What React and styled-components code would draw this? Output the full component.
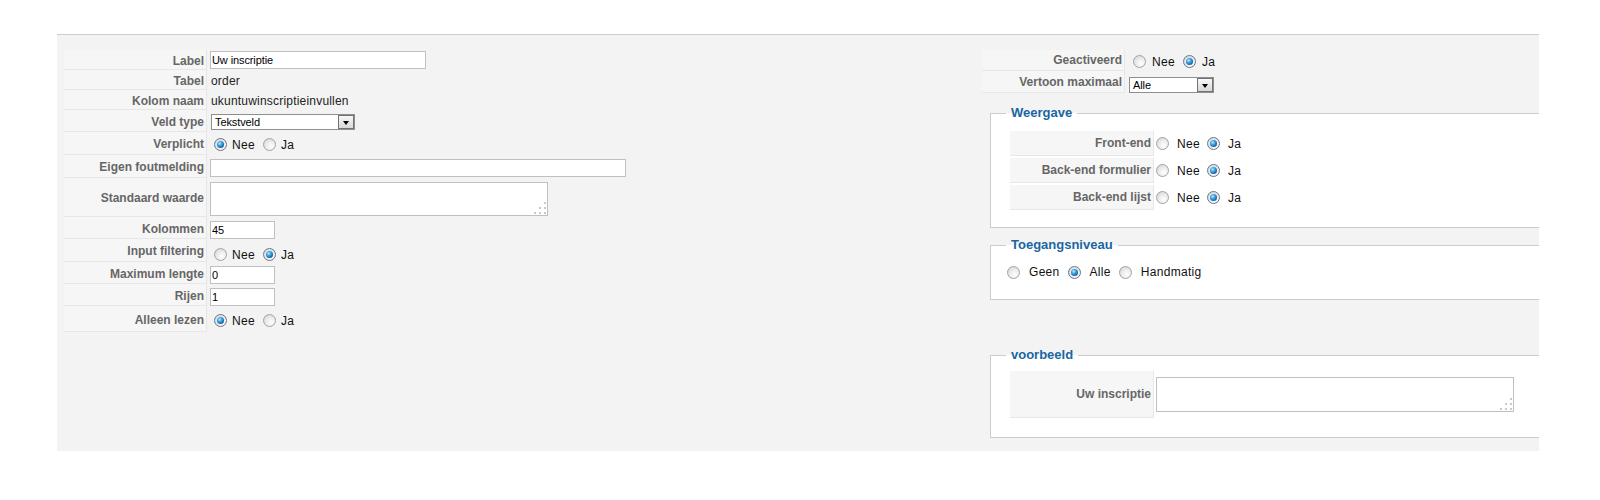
import React from 'react';
import styled, { createGlobalStyle } from 'styled-components';

const Global = createGlobalStyle`
  html, body { margin: 0; padding: 0; background: #ffffff; }
  body { font-family: "Liberation Sans", Arial, sans-serif; }
`;

const Page = styled.div`
  padding: 34px 0 0 57px;
`;

const Panel = styled.div`
  width: 1482px;
  box-sizing: border-box;
  background: #f3f3f3;
  border-top: 1px solid #cccccc;
  padding: 15px 0 13px 7px;
  display: grid;
  grid-template-columns: 918px minmax(0, 1fr);
  align-items: start;
  overflow: hidden;
`;

const Column = styled.div`
  display: flex;
  flex-direction: column;
  min-width: 0;
`;

const Row = styled.div`
  display: flex;
  height: ${(p) => p.$h}px;
`;

const Key = styled.div`
  flex: 0 0 ${(p) => p.$w || 143}px;
  box-sizing: border-box;
  background: #f6f6f6;
  border-bottom: 1px solid #e7e7e7;
  border-right: 1px solid #e7e7e7;
  display: flex;
  align-items: center;
  justify-content: flex-end;
  padding: ${(p) => p.$nudge || 0}px 2px 0 0;
  font: bold 12px/14px "Liberation Sans", Arial, sans-serif;
  color: #666666;
  white-space: nowrap;
`;

const Value = styled.div`
  flex: 1;
  min-width: 0;
  display: flex;
  align-items: ${(p) => (p.$top == null ? 'center' : 'flex-start')};
  padding: ${(p) => p.$top || 0}px 0 0 ${(p) => (p.$pad == null ? 3 : p.$pad)}px;
`;

const PlainText = styled.span`
  font: 12px/14px "Liberation Sans", Arial, sans-serif;
  color: #222222;
  letter-spacing: 0.2px;
  padding: 1px 0 0 1px;
`;

const TextInput = styled.input`
  box-sizing: border-box;
  width: ${(p) => p.$w}px;
  height: 18px;
  margin: 0;
  border: 1px solid #c0c0c0;
  background: #ffffff;
  padding: 0 1px;
  font: 11px "Liberation Sans", Arial, sans-serif;
  letter-spacing: -0.1px;
  color: #000000;
  outline: none;
`;

const AreaBox = styled.div`
  position: relative;
  width: ${(p) => p.$w}px;
  height: ${(p) => p.$h}px;
`;

const Area = styled.textarea`
  box-sizing: border-box;
  display: block;
  width: 100%;
  height: 100%;
  margin: 0;
  border: 1px solid #c0c0c0;
  background: #ffffff;
  resize: none;
  outline: none;
  font: 11px "Liberation Sans", Arial, sans-serif;
`;

const Grip = styled.svg`
  position: absolute;
  right: 2px;
  bottom: 2px;
  pointer-events: none;
`;

const SelectBox = styled.div`
  display: flex;
  align-items: stretch;
  box-sizing: border-box;
  width: ${(p) => p.$w}px;
  height: 16px;
  margin-left: 1px;
  border: 1px solid #8f8f8f;
  background: #ffffff;
  font: 11px/14px "Liberation Sans", Arial, sans-serif;
  letter-spacing: -0.1px;
  color: #000000;
`;

const SelectText = styled.span`
  flex: 1;
  padding-left: 3px;
`;

const SelectButton = styled.span`
  flex: 0 0 16px;
  box-sizing: border-box;
  border: 1px solid #737373;
  background: linear-gradient(#f8f8f8, #d8d8d8);
  display: flex;
  align-items: center;
  justify-content: center;

  &::after {
    content: '';
    border-left: 3.5px solid transparent;
    border-right: 3.5px solid transparent;
    border-top: 4px solid #000000;
    margin-top: 1px;
  }
`;

const RadioItem = styled.span`
  display: inline-flex;
  align-items: center;
`;

const RadioSet = styled.div`
  display: flex;
  align-items: center;
  height: ${(p) => p.$h || 13}px;
  margin-left: ${(p) => p.$lead}px;
  gap: ${(p) => p.$itemGap}px;

  ${RadioItem} {
    gap: ${(p) => p.$textGap}px;
  }
`;

const Dot = styled.span`
  position: relative;
  flex: 0 0 13px;
  width: 13px;
  height: 13px;
  box-sizing: border-box;
  border-radius: 50%;
  border: 1px solid ${(p) => (p.$on ? '#66778a' : '#a3a3a3')};
  background: radial-gradient(circle at 62% 68%, #ffffff 0%, #ececec 45%, #cfcfcf 100%);

  &::after {
    content: '';
    display: ${(p) => (p.$on ? 'block' : 'none')};
    position: absolute;
    left: 2px;
    top: 2px;
    width: 7px;
    height: 7px;
    border-radius: 50%;
    background: radial-gradient(circle at 38% 35%, #b8ecff 0%, #3fa2e0 35%, #0f5d9c 75%, #0a3c6a 100%);
  }
`;

const RadioText = styled.span`
  font: 12px/14px "Liberation Sans", Arial, sans-serif;
  letter-spacing: 0.3px;
  color: #111111;
`;

const Group = styled.fieldset`
  margin: ${(p) => p.$mt}px 0 0 8px;
  width: 600px;
  min-inline-size: auto;
  box-sizing: border-box;
  border: 1px solid #cccccc;
  background: #ffffff;
  padding: ${(p) => p.$pt}px 0 ${(p) => p.$pb}px 15px;
`;

const Legend = styled.legend`
  padding: 0 5px;
  font: bold 13px/16px "Liberation Sans", Arial, sans-serif;
  color: #1a66a2;
`;

const GroupRows = styled.div`
  display: flex;
  flex-direction: column;
  gap: 2px;
  margin-left: 4px;
`;

function Radios({ options, checked, lead, textGap, itemGap, h }) {
  return (
    <RadioSet $lead={lead} $textGap={textGap} $itemGap={itemGap} $h={h}>
      {options.map((o, i) => (
        <RadioItem key={o}>
          <Dot $on={i === checked} />
          <RadioText>{o}</RadioText>
        </RadioItem>
      ))}
    </RadioSet>
  );
}

function Select({ w, value }) {
  return (
    <SelectBox $w={w}>
      <SelectText>{value}</SelectText>
      <SelectButton />
    </SelectBox>
  );
}

function TextArea({ w, h }) {
  return (
    <AreaBox $w={w} $h={h}>
      <Area defaultValue="" />
      <Grip width="12" height="12" viewBox="0 0 12 12">
        <rect x="10" y="0" width="2" height="2" fill="#c9c9c9" />
        <rect x="5" y="5" width="2" height="2" fill="#c9c9c9" />
        <rect x="10" y="5" width="2" height="2" fill="#c9c9c9" />
        <rect x="0" y="10" width="2" height="2" fill="#c9c9c9" />
        <rect x="5" y="10" width="2" height="2" fill="#c9c9c9" />
        <rect x="10" y="10" width="2" height="2" fill="#c9c9c9" />
      </Grip>
    </AreaBox>
  );
}

const yesNo = ['Nee', 'Ja'];

const fieldRows = [
  { label: 'Label', h: 20, top: 1, kind: 'input', w: 216, value: 'Uw inscriptie' },
  { label: 'Tabel', h: 20, kind: 'text', value: 'order' },
  { label: 'Kolom naam', h: 20, kind: 'text', value: 'ukuntuwinscriptieinvullen' },
  { label: 'Veld type', h: 22, top: 4, kind: 'select', w: 144, value: 'Tekstveld' },
  { label: 'Verplicht', h: 23, top: 6, kind: 'radio', checked: 0 },
  { label: 'Eigen foutmelding', h: 23, top: 4, kind: 'input', w: 416, value: '' },
  { label: 'Standaard waarde', h: 39, top: 4, kind: 'area', w: 338, ah: 34 },
  { label: 'Kolommen', h: 22, top: 4, kind: 'input', w: 65, value: '45' },
  { label: 'Input filtering', h: 23, top: 9, kind: 'radio', checked: 1 },
  { label: 'Maximum lengte', h: 22, top: 4, kind: 'input', w: 65, value: '0' },
  { label: 'Rijen', h: 22, top: 4, kind: 'input', w: 65, value: '1' },
  { label: 'Alleen lezen', h: 26, top: 8, kind: 'radio', checked: 0 },
];

function FieldValue({ row }) {
  switch (row.kind) {
    case 'input':
      return <TextInput $w={row.w} defaultValue={row.value} />;
    case 'text':
      return <PlainText>{row.value}</PlainText>;
    case 'select':
      return <Select w={row.w} value={row.value} />;
    case 'area':
      return <TextArea w={row.w} h={row.ah} />;
    case 'radio':
      return <Radios options={yesNo} checked={row.checked} lead={4} textGap={5} itemGap={8} />;
    default:
      return null;
  }
}

const displayRows = ['Front-end', 'Back-end formulier', 'Back-end lijst'];

export default function App() {
  return (
    <>
      <Global />
      <Page>
        <Panel>
          <Column>
            {fieldRows.map((row) => (
              <Row key={row.label} $h={row.h}>
                <Key $nudge={2}>{row.label}</Key>
                <Value $top={row.top}>
                  <FieldValue row={row} />
                </Value>
              </Row>
            ))}
          </Column>

          <Column>
            <Row $h={21}>
              <Key>Geactiveerd</Key>
              <Value $top={5}>
                <Radios options={yesNo} checked={1} lead={5} textGap={6} itemGap={8} />
              </Value>
            </Row>
            <Row $h={22}>
              <Key>Vertoon maximaal</Key>
              <Value $top={6}>
                <Select w={85} value="Alle" />
              </Value>
            </Row>

            <Group $mt={12} $pt={10} $pb={17}>
              <Legend>Weergave</Legend>
              <GroupRows>
                {displayRows.map((label) => (
                  <Row key={label} $h={25}>
                    <Key $w={144}>{label}</Key>
                    <Value $pad={2}>
                      <Radios options={yesNo} checked={1} lead={0} textGap={8} itemGap={7} />
                    </Value>
                  </Row>
                ))}
              </GroupRows>
            </Group>

            <Group $mt={9} $pt={11} $pb={19}>
              <Legend>Toegangsniveau</Legend>
              <Radios
                options={['Geen', 'Alle', 'Handmatig']}
                checked={1}
                lead={1}
                textGap={9}
                itemGap={8}
                h={16}
              />
            </Group>

            <Group $mt={47} $pt={8} $pb={19}>
              <Legend>voorbeeld</Legend>
              <GroupRows>
                <Row $h={47}>
                  <Key $w={144}>Uw inscriptie</Key>
                  <Value $pad={2}>
                    <TextArea w={358} h={35} />
                  </Value>
                </Row>
              </GroupRows>
            </Group>
          </Column>
        </Panel>
      </Page>
    </>
  );
}
